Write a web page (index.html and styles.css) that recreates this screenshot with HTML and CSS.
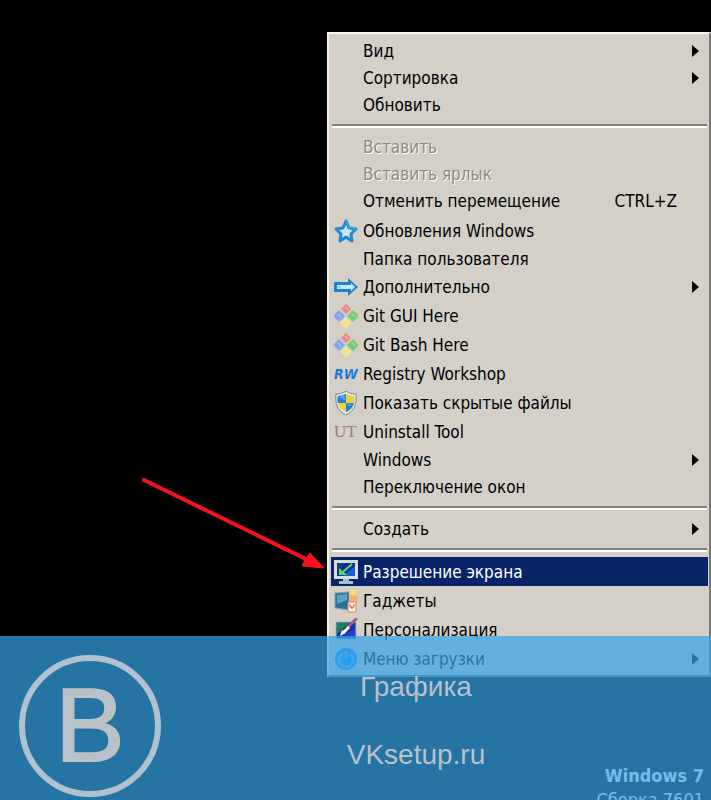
FILE: index.html
```html
<!DOCTYPE html>
<html lang="ru">
<head>
    <meta charset="UTF-8">
    <meta name="viewport" content="width=device-width, initial-scale=1.0">
    <title>Графика</title>
    <link rel="stylesheet" href="styles.css">
</head>
<body>
    <main class="desktop">
        <p class="watermark"><strong>Windows 7</strong><br>Сборка 7601</p>

        <ul class="menu">
            <li><button type="button" class="item"><span class="icon"></span>Вид<span class="more"></span></button></li>
            <li><button type="button" class="item"><span class="icon"></span>Сортировка<span class="more"></span></button></li>
            <li><button type="button" class="item"><span class="icon"></span>Обновить</button></li>
            <li class="separator"></li>
            <li><button type="button" class="item" disabled><span class="icon"></span>Вставить</button></li>
            <li><button type="button" class="item" disabled><span class="icon"></span>Вставить ярлык</button></li>
            <li><button type="button" class="item"><span class="icon"></span>Отменить перемещение<span class="shortcut">CTRL+Z</span></button></li>
            <li class="extensions"><button type="button" class="item with-icon">
                <svg class="icon" viewBox="0 0 24 24"><path d="M12 2l3 7 7 1-5 5 1 7-6-4-6 4 1-7-5-5 7-1z" fill="#c9e6f2" stroke="#2389cf" stroke-width="3" stroke-linejoin="round"/><path d="M12 2l3 7 7 1" fill="none" stroke="#48b0e4"/></svg>
                Обновления Windows</button></li>
            <li><button type="button" class="item"><span class="icon"></span>Папка пользователя</button></li>
            <li><button type="button" class="item with-icon">
                <svg class="icon" viewBox="0 0 24 24"><path d="M0 7h14V3l10 9-10 9v-4H0z" fill="#1f83cf"/><path d="M3 10h14V8l4 4-4 4v-2H3z" fill="#c5ebfa"/><path d="M3 12h4" stroke="#62c4ee"/></svg>
                Дополнительно<span class="more"></span></button></li>
            <li><button type="button" class="item with-icon">
                <svg class="icon" viewBox="0 0 24 24"><g stroke-width="1"><path d="M12 0l5 5-5 5-5-5z" fill="#e9898a" stroke="#ef9e9c"/><path d="M5 6l6 6-6 6-6-6z" fill="#80a9e6" stroke="#9bbcec"/><path d="M19 6l6 6-6 6-6-6z" fill="#79cb78" stroke="#98d697"/><path d="M12 14l5 5-5 5-5-5z" fill="#f5e38a" stroke="#f7eaa4"/></g><path d="M11 3l3 3M4 10l3 3M18 10l3 3" stroke="#d5dae0" stroke-width="1"/></svg>
                Git GUI Here</button></li>
            <li><button type="button" class="item with-icon">
                <svg class="icon" viewBox="0 0 24 24"><g stroke-width="1"><path d="M12 0l5 5-5 5-5-5z" fill="#e9898a" stroke="#ef9e9c"/><path d="M5 6l6 6-6 6-6-6z" fill="#80a9e6" stroke="#9bbcec"/><path d="M19 6l6 6-6 6-6-6z" fill="#79cb78" stroke="#98d697"/><path d="M12 14l5 5-5 5-5-5z" fill="#f5e38a" stroke="#f7eaa4"/></g><path d="M11 3l3 3M4 10l3 3M18 10l3 3" stroke="#d5dae0" stroke-width="1"/></svg>
                Git Bash Here</button></li>
            <li><button type="button" class="item with-icon"><span class="icon icon-rw">RW</span>Registry Workshop</button></li>
            <li><button type="button" class="item with-icon">
                <svg class="icon" viewBox="0 0 24 24"><path d="M12 0c3 2 6 3 10 3 1 9-1 17-10 21C3 20 1 12 2 3c4 0 7-1 10-3z" fill="#e3e8ea" stroke="#75828c"/><path d="M12 3v9H4c-1-2-1-4 0-7 3 0 5-1 8-2zM12 12h8c-1 4-3 7-8 9z" fill="#1f86d2"/><path d="M12 3c3 1 5 2 8 2 1 3 1 5 0 7h-8zM4 12h8v9c-5-2-7-5-8-9z" fill="#f4d13c"/><path d="M6 7l4-2v4M14 14h3" stroke="#73c1ee" fill="none"/></svg>
                Показать скрытые файлы</button></li>
            <li><button type="button" class="item with-icon"><span class="icon icon-ut">UT</span>Uninstall Tool</button></li>
            <li><button type="button" class="item"><span class="icon"></span>Windows<span class="more"></span></button></li>
            <li><button type="button" class="item"><span class="icon"></span>Переключение окон</button></li>
            <li class="separator"></li>
            <li><button type="button" class="item"><span class="icon"></span>Создать<span class="more"></span></button></li>
            <li class="separator"></li>
            <li><button type="button" class="item with-icon selected">
                <svg class="icon" viewBox="0 0 24 24"><path d="M0 0h24v19H0z" fill="#d5dde0"/><path d="M3 3h18v13H3z" fill="#102c9c"/><path d="M3 3h9L3 12z" fill="#193f7d"/><path d="M21 6v10H9z" fill="#205cd0"/><path d="M18 4l-9 8" stroke="#47e463" stroke-width="2"/><path d="M5 8v7h8z" fill="#4be15b"/><path d="M9 19h6v2h4v3H5v-3h4z" fill="#a8bec9"/></svg>
                Разрешение экрана</button></li>
            <li><button type="button" class="item with-icon">
                <svg class="icon" viewBox="0 0 24 24"><path d="M1 4l14-1v18L1 19z" fill="#286f9b" stroke="#8ba4b1"/><path d="M3 6l10-1v6L3 15z" fill="#58a4c5"/><path d="M15 2h7v10h-7z" fill="#f2c34a"/><circle cx="19" cy="3" r="3" fill="#f7df7d"/><path d="M15 7h9v6h-9z" fill="#eeb37d"/><path d="M14 13h8v10h-8z" fill="#fff2e9" stroke="#d38252"/><path d="M16 15v3h4v-3M18 18v2" fill="none" stroke="#d2512d"/></svg>
                Гаджеты</button></li>
            <li><button type="button" class="item with-icon">
                <svg class="icon" viewBox="0 0 24 24"><path d="M2 4h20v17H2z" fill="#1730a5" stroke="#aeb9c3"/><path d="M3 5h12L3 16z" fill="#188752"/><path d="M21 10v10H7z" fill="#223fd2"/><path d="M13 10L23 0" stroke="#a65b88" stroke-width="3"/><path d="M6 18l2-6 4 3z" fill="#f3f6ff"/><path d="M10 14l5-5" stroke="#fff" stroke-width="3"/></svg>
                Персонализация</button></li>
            <li><button type="button" class="item with-icon">
                <svg class="icon" viewBox="0 0 24 24"><circle cx="12" cy="12" r="11" fill="#168cf0"/><path d="M8 7a7 7 0 1 0 8 0M12 4v8" fill="none" stroke="#4fb0fa" stroke-width="3"/></svg>
                Меню загрузки<span class="more"></span></button></li>
        </ul>

        <svg class="pointer" viewBox="0 0 184 92"><path d="M2 2l164 80" stroke="#f5121a" stroke-width="4" stroke-linecap="round"/><path d="M168 75l14 15-22-2 3-6z" fill="#f5121a" stroke="#f5121a" stroke-linejoin="round"/></svg>

        <footer class="banner">
            <div class="logo">B</div>
            <p class="caption">Графика<br>VKsetup.ru</p>
        </footer>
    </main>
</body>
</html>
```

FILE: styles.css
```css
body {
    margin: 0;
    background-color: #000;
    font-family: "DejaVu Sans Condensed", Tahoma, sans-serif;
    font-size: 17px;
}
.desktop {
    position: relative;
    height: 100vh;
    min-height: 700px;
    overflow: hidden;
}

/* context menu */
.menu {
    position: absolute;
    top: 32px;
    right: 0;
    width: 384px;
    box-sizing: border-box;
    margin: 0;
    padding: 3px 1px 2px 2px;
    list-style: none;
    background-color: #d4d0c8;
    border: 2px solid;
    border-color: #f4f3ef #77756f #77756f #f4f3ef;
}
.item {
    display: flex;
    align-items: center;
    width: 100%;
    height: 27px;
    padding: 0 9px 0 3px;
    border: none;
    background: none;
    color: #000;
    font: inherit;
    text-align: left;
    white-space: nowrap;
}
.item:disabled {
    color: #8b8984;
    text-shadow: 1px 1px #fff;
}
.with-icon {
    height: 29px;
}
.selected {
    background-color: #0a246a;
    color: #fff;
}
.extensions {
    margin-top: 2px;
}
.icon {
    flex: none;
    width: 24px;
    height: 24px;
    margin-right: 5px;
    line-height: 24px;
}
.icon-rw {
    color: #187bdc;
    font-size: 14px;
    font-weight: bold;
    font-style: italic;
}
.icon-ut {
    color: #ad7773;
    font-family: "Liberation Serif", serif;
    font-size: 17px;
}
.shortcut {
    margin-left: auto;
    padding-right: 22px;
}
.more {
    margin-left: auto;
    border: 6px solid transparent;
    border-left: 7px solid #000;
    border-right: none;
}
.separator {
    height: 2px;
    margin: 6px 1px 5px;
    border-top: 2px solid #85827c;
    background-color: #fff;
}

/* red arrow to the selected item */
.pointer {
    position: absolute;
    top: 478px;
    right: 385px;
    width: 184px;
    height: 92px;
}

.watermark {
    position: absolute;
    right: 7px;
    bottom: -12px;
    margin: 0;
    color: #fff;
    font-size: 18px;
    line-height: 24px;
    text-align: right;
}

.banner {
    position: absolute;
    left: 0;
    right: 0;
    bottom: 0;
    display: flex;
    box-sizing: border-box;
    height: 164px;
    padding: 17px 40px 0 19px;
    background-color: rgba(52, 163, 231, 0.71);
    color: #b9c1c9;
    font-family: "Liberation Sans", Arial, sans-serif;
}
.logo {
    flex: none;
    box-sizing: border-box;
    width: 142px;
    height: 142px;
    margin-top: 2px;
    border: 6px solid #b0c2d0;
    border-radius: 50%;
    font-size: 104px;
    line-height: 128px;
    text-align: center;
    -webkit-text-stroke: 2px #b9c1c9;
}
.caption {
    flex: 1;
    margin: 0;
    font-size: 28px;
    line-height: 68px;
    text-align: center;
}
```
